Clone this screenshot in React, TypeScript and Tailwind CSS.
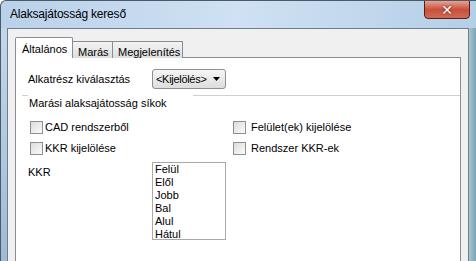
import React from "react";

const ui = { fontFamily: '"Liberation Sans", Arial, sans-serif' };

function Check({ label, className = "", gap = "ml-[3px]" }: { label: string; className?: string; gap?: string }) {
  return (
    <div className={"flex items-center h-[13px] " + className}>
      <div className="w-[13px] h-[13px] border border-[#8e8f8f] bg-gradient-to-br from-[#dcdcdc] to-[#fbfbfb] shrink-0" />
      <span className={gap + " text-[11px] text-black leading-[13px]"}>{label}</span>
    </div>
  );
}

export default function App() {
  return (
    <div
      className="w-[476px] h-[261px] overflow-hidden relative rounded-tl-[6px] border-t border-l border-[#4c5a66] bg-gradient-to-r from-[#b9d1ea] via-[#cfe1f3] to-[#b4cfe6]"
      style={ui}
    >
      {/* title bar */}
      <div className="h-[27px] flex items-start">
        <span className="ml-[9px] mt-[4px] text-[12px] text-black tracking-[-0.2px]">Alaksajátosság kereső</span>
      </div>
      {/* close button */}
      <div className="absolute top-[-1px] left-[423px] w-[46px] h-[19px] rounded-b-[4px] border border-[#5a1e16] bg-gradient-to-b from-[#e4a294] via-[#c8503c] to-[#d06a52] flex items-center justify-center">
        <span className="text-white font-bold text-[14px] leading-none" style={{ fontFamily: '"DejaVu Sans", sans-serif', textShadow: "0 0 2px #4a1008" }}>✕</span>
      </div>
      <div className="flex h-[233px]">
        <div className="w-[6px] bg-gradient-to-b from-[#c3d7ec] to-[#9fbad6]" />
        {/* client */}
        <div className="w-[462px] border-t border-l border-r border-[#6e7e8e] bg-[#f0f0f0] pl-[7px] pt-[8px]">
          {/* tabs */}
          <div className="flex items-end h-[21px] relative z-10">
            <div className="h-[21px] w-[58px] bg-white border border-b-0 border-[#898c95] rounded-t-[2px] flex items-start pl-[6px] pt-[3px] text-[11px]">
              Általános
            </div>
            <div className="h-[17px] w-[41px] -ml-px bg-gradient-to-b from-[#f3f3f3] to-[#dedede] border border-b-0 border-[#898c95] flex items-start pl-[5px] pt-[2px] text-[11px]">
              Marás
            </div>
            <div className="h-[17px] w-[71px] -ml-px bg-gradient-to-b from-[#f3f3f3] to-[#dedede] border border-b-0 border-[#898c95] flex items-start pl-[5px] pt-[2px] text-[11px]">
              Megjelenítés
            </div>
          </div>
          {/* panel */}
          <div className="-mt-px w-[446px] h-[210px] bg-white border border-[#898c95] pl-[12px] pt-[11px] text-[11px] text-black">
            <div className="flex items-center h-[20px]">
              <span className="w-[124px]">Alkatrész kiválasztás</span>
              <div className="w-[74px] h-[20px] border border-[#8e8f8f] rounded-[3px] bg-gradient-to-b from-[#f6f6f6] to-[#dddddd] flex items-center justify-between pl-[3px] pr-[5px] text-[11px]">
                <span className="tracking-[-0.3px]">&lt;Kijelölés&gt;</span>
                <svg width="7" height="4" viewBox="0 0 7 4"><path d="M0 0h7L3.5 4z" fill="#000" /></svg>
              </div>
            </div>
            <div className="flex items-center h-[13px] mt-[6px] -ml-[6px]">
              <div className="w-[6px] h-px bg-[#c9d2d8] self-start" />
              <span className="ml-[1px] mt-[4px]">Marási alaksajátosság síkok</span>
              <div className="flex-1 ml-[26px] h-px bg-[#c9d2d8] self-start" />
            </div>
            <div className="mt-[13px] flex flex-col gap-[8px]">
              <div className="flex">
                <Check label="CAD rendszerből" className="w-[203px] ml-[2px]" gap="ml-[2px]" />
                <Check label="Felület(ek) kijelölése" gap="ml-[5px]" />
              </div>
              <div className="flex">
                <Check label="KKR kijelölése" className="w-[203px] ml-[2px]" gap="ml-[2px]" />
                <Check label="Rendszer KKR-ek" gap="ml-[5px]" />
              </div>
            </div>
            <div className="flex mt-[7px]">
              <span className="w-[124px] mt-[2px]">KKR</span>
              <div className="w-[74px] h-[78px] border border-[#a9a9a9] pl-[2px] leading-[13px]">
                <div>Felül</div>
                <div>Elől</div>
                <div>Jobb</div>
                <div>Bal</div>
                <div>Alul</div>
                <div>Hátul</div>
              </div>
            </div>
          </div>
        </div>
        <div className="flex-1 bg-gradient-to-r from-[#a8c6cf] to-[#7fa3b1]" />
      </div>
    </div>
  );
}
